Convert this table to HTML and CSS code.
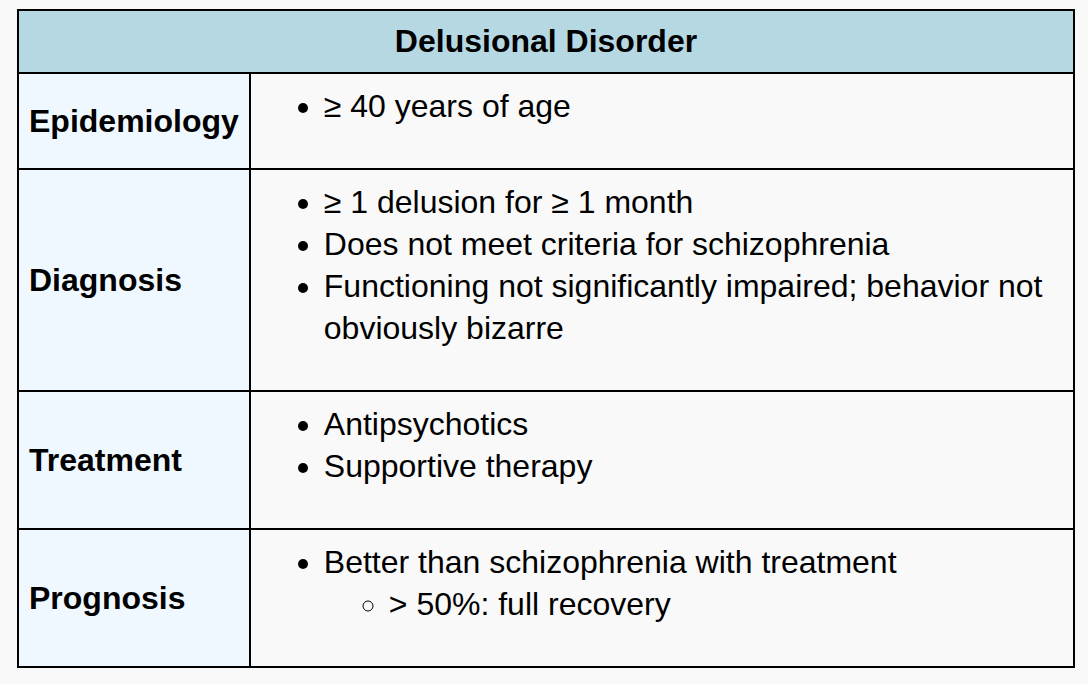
FILE: index.html
```html
<!DOCTYPE html>
<html lang="en">
<head>
<meta charset="utf-8">
<title>Delusional Disorder</title>
<link rel="stylesheet" href="styles.css">
</head>
<body>
<table class="info-table">
  <thead>
    <tr>
      <th class="title" colspan="2">Delusional Disorder</th>
    </tr>
  </thead>
  <tbody>
    <tr>
      <th class="label">Epidemiology</th>
      <td class="content">
        <ul class="list">
          <li>≥ 40 years of age</li>
        </ul>
      </td>
    </tr>
    <tr>
      <th class="label">Diagnosis</th>
      <td class="content">
        <ul class="list">
          <li>≥ 1 delusion for ≥ 1 month</li>
          <li>Does not meet criteria for schizophrenia</li>
          <li>Functioning not significantly impaired; behavior not obviously bizarre</li>
        </ul>
      </td>
    </tr>
    <tr>
      <th class="label">Treatment</th>
      <td class="content">
        <ul class="list">
          <li>Antipsychotics</li>
          <li>Supportive therapy</li>
        </ul>
      </td>
    </tr>
    <tr>
      <th class="label">Prognosis</th>
      <td class="content">
        <ul class="list">
          <li>Better than schizophrenia with treatment
            <ul class="sublist">
              <li>&gt; 50%: full recovery</li>
            </ul>
          </li>
        </ul>
      </td>
    </tr>
  </tbody>
</table>
</body>
</html>
```

FILE: styles.css
```css
html, body {
  margin: 0;
  padding: 0;
  background: #f9f9f9;
}

body {
  padding: 9px 0 0 17px;
  font-family: "Liberation Sans", Arial, Helvetica, sans-serif;
  font-size: 32px;
  line-height: 42px;
  color: #000;
}

.info-table {
  border-collapse: collapse;
  width: 1058px;
  border: 2px solid #000;
}

.info-table th,
.info-table td {
  border: 2px solid #000;
}

.title {
  background: #b6d8e3;
  font-weight: bold;
  text-align: center;
  padding: 10px 11px;
  line-height: 41px;
}

.label {
  background: #f0f8ff;
  font-weight: bold;
  text-align: left;
  vertical-align: middle;
  width: 208px;
  padding: 11px 10px;
}

.content {
  background: #f9f9f9;
  vertical-align: top;
  padding: 11px 11px 11px 11px;
}

.list {
  margin: 0 0 30px 0;
  padding-left: 62px;
}

.sublist {
  margin: 0;
  padding-left: 65px;
  list-style-type: circle;
}
```
